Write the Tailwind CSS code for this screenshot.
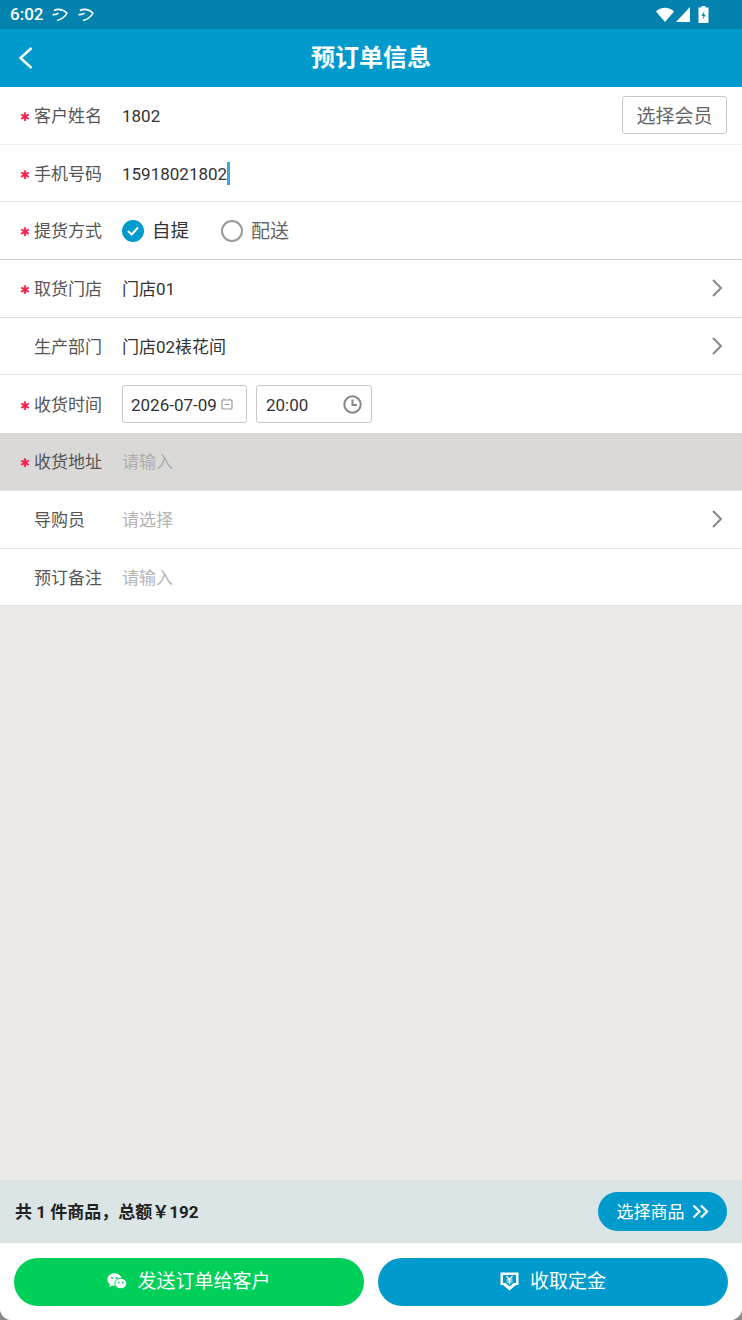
<!DOCTYPE html>
<html lang="en">
  <head>
    <meta charset="UTF-8" />
    <title>预订单信息</title>
    <script src="https://cdn.jsdelivr.net/npm/@tailwindcss/browser@4"></script>
  </head>
  <body class="bg-[#8a8a8a] w-[742px] h-[1320px] overflow-hidden font-['Roboto','Noto_Sans_CJK_SC',sans-serif] text-[17px]">
    <div class="w-[742px] h-[1320px] flex flex-col bg-[#ebeae8] rounded-b-[12px] overflow-hidden">

      <!-- Status bar -->
      <div class="h-[29px] shrink-0 bg-[#0282ad] flex items-center justify-between pl-[10px] pr-[33px] text-white">
        <div class="flex items-center gap-[8px]">
          <span class="text-[17px] font-medium">6:02</span>
          <svg class="mt-[2px]" width="18" height="16" viewBox="0 0 18 16" fill="none" stroke="#fff" stroke-width="1.6"><path d="M1.5 6.5C3 6.8 5.5 6.5 7.5 5.2M3 2.5C7 0.5 12 1.5 16 5C14 9 10 11.5 6 12.5" /></svg>
          <svg class="mt-[2px]" width="18" height="16" viewBox="0 0 18 16" fill="none" stroke="#fff" stroke-width="1.6"><path d="M1.5 6.5C3 6.8 5.5 6.5 7.5 5.2M3 2.5C7 0.5 12 1.5 16 5C14 9 10 11.5 6 12.5" /></svg>
        </div>
        <div class="flex items-center gap-[2px]">
          <svg width="18" height="15" viewBox="0 0 18 15" fill="#fff"><path d="M0 4.5C5 -0.5 13 -0.5 18 4.5L9 15Z" /></svg>
          <svg width="14" height="15" viewBox="0 0 14 15" fill="#fff"><path d="M14 0V15H0Z" /></svg>
          <svg class="ml-[6px]" width="11" height="17" viewBox="0 0 11 17"><path fill="#fff" d="M3.5 0H7.5V1.5H10.5V17H0.5V1.5H3.5Z" /><path fill="#0282ad" d="M6.5 5L3.5 10H5.5L4.5 14L7.8 8.5H5.8Z" /></svg>
        </div>
      </div>

      <!-- Header -->
      <div class="relative h-[58px] shrink-0 bg-[#019acd] flex items-center justify-center">
        <svg class="absolute left-[18px] top-[17px]" width="15" height="24" viewBox="0 0 15 24" fill="none" stroke="#fff" stroke-width="2.4"><path d="M13.5 2L2.5 12L13.5 22" /></svg>
        <span class="text-white text-[24px] font-bold">预订单信息</span>
      </div>

      <!-- Form -->
      <div class="bg-white shrink-0">
        <div class="h-[57.7px] flex items-center border-b border-[#efefef] pl-[20px] pr-[15px]">
          <span class="w-[14px] text-[#f5224f] font-['DejaVu_Sans'] text-[12px] leading-none pt-[3px]">✱</span>
          <span class="w-[88px] pt-[3px] text-[#555555]">客户姓名</span>
          <span class="flex-1 pt-[3px] text-[#333333]">1802</span>
          <button class="w-[105px] h-[38px] border border-[#c8c8c8] rounded-[3px] text-[#666666] text-[19px] leading-none pt-[2px]">选择会员</button>
        </div>
        <div class="h-[57.7px] flex items-center border-b border-[#e6e6e6] pl-[20px] pr-[15px]">
          <span class="w-[14px] text-[#f5224f] font-['DejaVu_Sans'] text-[12px] leading-none pt-[3px]">✱</span>
          <span class="w-[88px] pt-[3px] text-[#555555]">手机号码</span>
          <span class="pt-[3px] text-[#333333]">15918021802</span>
          <span class="w-[2.5px] h-[23px] bg-[#3aa9d6]"></span>
        </div>
        <div class="h-[57.7px] flex items-center border-b border-[#cfcfcf] pl-[20px] pr-[15px]">
          <span class="w-[14px] text-[#f5224f] font-['DejaVu_Sans'] text-[12px] leading-none pt-[3px]">✱</span>
          <span class="w-[88px] pt-[3px] text-[#555555]">提货方式</span>
          <svg width="22" height="22" viewBox="0 0 22 22"><circle cx="11" cy="11" r="11" fill="#019acd" /><path d="M6 11L9.7 14.5L16 7.5" fill="none" stroke="#fff" stroke-width="2" /></svg>
          <span class="ml-[8px] pt-[3px] text-[18.5px] text-[#333333]">自提</span>
          <span class="ml-[32px] w-[22px] h-[22px] rounded-full border-[2px] border-[#999999]"></span>
          <span class="ml-[8px] pt-[3px] text-[19px] text-[#666666]">配送</span>
        </div>
        <div class="h-[57.7px] flex items-center border-b border-[#dcdcdc] pl-[20px] pr-[19px]">
          <span class="w-[14px] text-[#f5224f] font-['DejaVu_Sans'] text-[12px] leading-none pt-[3px]">✱</span>
          <span class="w-[88px] pt-[3px] text-[#555555]">取货门店</span>
          <span class="flex-1 pt-[3px] text-[#333333]">门店01</span>
          <svg width="12" height="20" viewBox="0 0 12 20" fill="none" stroke="#888888" stroke-width="2"><path d="M2 2L10 10L2 18" /></svg>
        </div>
        <div class="h-[57.7px] flex items-center border-b border-[#e6e6e6] pl-[34px] pr-[19px]">
          <span class="w-[88px] pt-[3px] text-[#555555]">生产部门</span>
          <span class="flex-1 pt-[3px] text-[#333333]">门店02裱花间</span>
          <svg width="12" height="20" viewBox="0 0 12 20" fill="none" stroke="#888888" stroke-width="2"><path d="M2 2L10 10L2 18" /></svg>
        </div>
        <div class="h-[57.7px] flex items-center pl-[20px]">
          <span class="w-[14px] text-[#f5224f] font-['DejaVu_Sans'] text-[12px] leading-none pt-[3px]">✱</span>
          <span class="w-[88px] pt-[3px] text-[#555555]">收货时间</span>
          <div class="w-[125px] h-[38px] border border-[#c8c8c8] rounded-[3px] flex items-center pl-[8px] text-[#333333]">
            <span class="pt-[2px]">2026-07-09</span>
            <svg class="ml-[4px]" width="12" height="12" viewBox="0 0 12 12" fill="none" stroke="#999999" stroke-width="1.2"><rect x="1" y="2" width="10" height="9" rx="1" /><path d="M3 0.5V2M9 0.5V2M3.5 6.5H8.5" /></svg>
          </div>
          <div class="ml-[9px] w-[116px] h-[38px] border border-[#c8c8c8] rounded-[3px] flex items-center justify-between pl-[9px] pr-[9px] text-[#333333]">
            <span class="pt-[2px]">20:00</span>
            <svg width="19" height="19" viewBox="0 0 19 19" fill="none" stroke="#888888" stroke-width="2"><circle cx="9.5" cy="9.5" r="8.2" /><path d="M9.5 4.5V10H14" /></svg>
          </div>
        </div>
        <div class="h-[57.7px] flex items-center bg-[#dad9d7] border-b border-[#e6e6e6] pl-[20px] pr-[15px]">
          <span class="w-[14px] text-[#f5224f] font-['DejaVu_Sans'] text-[12px] leading-none pt-[3px]">✱</span>
          <span class="w-[88px] pt-[3px] text-[#555555]">收货地址</span>
          <span class="pt-[3px] text-[#aeadab]">请输入</span>
        </div>
        <div class="h-[57.7px] flex items-center border-b border-[#e6e6e6] pl-[34px] pr-[19px]">
          <span class="w-[88px] pt-[3px] text-[#555555]">导购员</span>
          <span class="flex-1 pt-[3px] text-[#b5b5b5]">请选择</span>
          <svg width="12" height="20" viewBox="0 0 12 20" fill="none" stroke="#888888" stroke-width="2"><path d="M2 2L10 10L2 18" /></svg>
        </div>
        <div class="h-[57.7px] flex items-center border-b border-[#e0e0e0] pl-[34px] pr-[15px]">
          <span class="w-[88px] pt-[3px] text-[#555555]">预订备注</span>
          <span class="pt-[3px] text-[#b5b5b5]">请输入</span>
        </div>
      </div>

      <div class="flex-1"></div>

      <!-- Summary -->
      <div class="h-[63px] shrink-0 bg-[#dce5e6] flex items-center justify-between pl-[15px] pr-[15px]">
        <span class="font-bold text-[17px] text-[#222222] pt-[2px]">共 1 件商品，总额￥192</span>
        <div class="w-[129px] h-[39px] rounded-full bg-[#019acd] flex items-center justify-center gap-[7px] text-white text-[17px]">
          <span class="pt-[2px]">选择商品</span>
          <svg width="17" height="15" viewBox="0 0 17 15" fill="none" stroke="#fff" stroke-width="2.2"><path d="M1.5 1.5L7.5 7.5L1.5 13.5M9 1.5L15 7.5L9 13.5" /></svg>
        </div>
      </div>

      <!-- Actions -->
      <div class="h-[77px] shrink-0 bg-white flex items-start gap-[14px] pt-[14.5px] px-[14px]">
        <button class="flex-1 h-[48px] rounded-full bg-[#00cf5a] flex items-center justify-center gap-[10px] text-white text-[19px]">
          <svg width="20" height="17" viewBox="0 0 20 17"><ellipse cx="7.5" cy="6.5" rx="7.2" ry="6.2" fill="#fff" /><path d="M3 11L2.5 14L6 12Z" fill="#fff" /><ellipse cx="13.8" cy="10.5" rx="6" ry="5.2" fill="#fff" stroke="#00cf5a" stroke-width="1" /><circle cx="5" cy="5" r="1" fill="#00cf5a" /><circle cx="9.7" cy="5" r="1" fill="#00cf5a" /><circle cx="11.8" cy="9.5" r="0.9" fill="#00cf5a" /><circle cx="15.8" cy="9.5" r="0.9" fill="#00cf5a" /></svg>
          <span class="pt-[2px]">发送订单给客户</span>
        </button>
        <button class="flex-1 h-[48px] rounded-full bg-[#019acd] flex items-center justify-center gap-[11px] text-white text-[19px]">
          <svg width="19" height="19" viewBox="0 0 19 19"><path d="M0.5 0.5H18.5V13H16L9.5 18.5L3 13H0.5Z" fill="#fff" /><path d="M3 3H16V11H13.5L9.5 14.5L5.5 11H3Z" fill="#019acd" /><path d="M6.5 4L9.5 7.5L12.5 4M9.5 7.5V12.5M6.5 8H12.5M6.5 10H12.5" fill="none" stroke="#fff" stroke-width="1.2" /></svg>
          <span class="pt-[2px]">收取定金</span>
        </button>
      </div>
    </div>
  </body>
</html>
